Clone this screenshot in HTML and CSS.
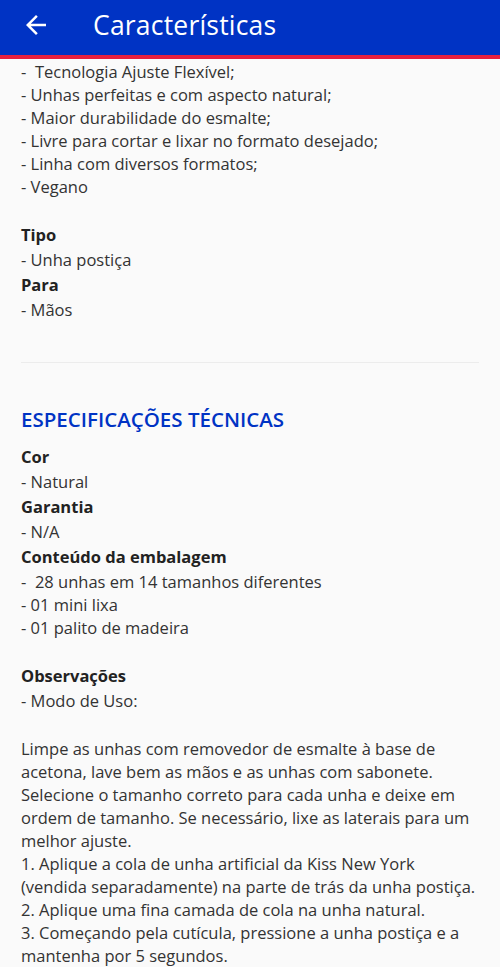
FILE: index.html
```html
<!DOCTYPE html>
<html lang="pt-BR">
<head>
  <meta charset="UTF-8">
  <meta name="viewport" content="width=device-width, initial-scale=1.0">
  <title>Características</title>
  <link rel="stylesheet" href="styles.css">
</head>
<body>
  <header class="topbar">
    <button class="back" aria-label="Voltar">
      <svg viewBox="0 0 24 24" width="30" height="30"><path d="M20 11H7.83l5.59-5.59L12 4l-8 8 8 8 1.41-1.41L7.83 13H20v-2z" fill="#fff"/></svg>
    </button>
    <h1>Características</h1>
  </header>

  <main class="content">
    <p class="text gap-after">-&nbsp; Tecnologia Ajuste Flexível;<br>- Unhas perfeitas e com aspecto natural;<br>- Maior durabilidade do esmalte;<br>- Livre para cortar e lixar no formato desejado;<br>- Linha com diversos formatos;<br>- Vegano</p>

    <h3 class="label">Tipo</h3>
    <p class="text">- Unha postiça</p>
    <h3 class="label">Para</h3>
    <p class="text">- Mãos</p>

    <hr class="divider">

    <h2 class="section-title">ESPECIFICAÇÕES TÉCNICAS</h2>

    <h3 class="label">Cor</h3>
    <p class="text">- Natural</p>
    <h3 class="label">Garantia</h3>
    <p class="text">- N/A</p>
    <h3 class="label">Conteúdo da embalagem</h3>
    <p class="text gap-after">-&nbsp; 28 unhas em 14 tamanhos diferentes<br>- 01 mini lixa<br>- 01 palito de madeira</p>
    <h3 class="label">Observações</h3>
    <p class="text gap-after">- Modo de Uso:</p>
    <p class="text">Limpe as unhas com removedor de esmalte à base de acetona, lave bem as mãos e as unhas com sabonete. Selecione o tamanho correto para cada unha e deixe em ordem de tamanho. Se necessário, lixe as laterais para um melhor ajuste.<br>1. Aplique a cola de unha artificial da Kiss New York (vendida separadamente) na parte de trás da unha postiça.<br>2. Aplique uma fina camada de cola na unha natural.<br>3. Começando pela cutícula, pressione a unha postiça e a mantenha por 5 segundos.</p>
  </main>
</body>
</html>
```

FILE: styles.css
```css
body {
  font-family: "Open Sans", Arial, sans-serif;
  margin: 0;
  padding: 0;
  background-color: #fafafa;
  color: #333;
  overflow: hidden;
}

.topbar {
  display: flex;
  align-items: center;
  box-sizing: border-box;
  height: 59px;
  padding-bottom: 5px;
  background-color: #0033c4;
  border-bottom: 4px solid #e8203e;
  color: #fff;
}

.back {
  display: flex;
  align-items: center;
  justify-content: center;
  width: 30px;
  height: 30px;
  margin-left: 21px;
  padding: 0;
  border: none;
  background: none;
}

.topbar h1 {
  margin: 0 0 0 42px;
  font-size: 26.5px;
  font-weight: 400;
  letter-spacing: 0.2px;
}

.content {
  padding: 1px 21px 0;
}

.text {
  margin: 0 0 2px;
  font-size: 16.5px;
  line-height: 23px;
}

.gap-after {
  margin-bottom: 25px;
}

.label {
  margin: 0 0 2px;
  font-size: 16.5px;
  line-height: 23px;
  font-weight: 700;
  color: #222;
}

.divider {
  margin: 41px 0 0;
  border: none;
  border-top: 1px solid #ececec;
}

.section-title {
  margin: 42px 0 12px;
  font-size: 20.5px;
  line-height: 28px;
  font-weight: 600;
  color: #0033c4;
}
```
